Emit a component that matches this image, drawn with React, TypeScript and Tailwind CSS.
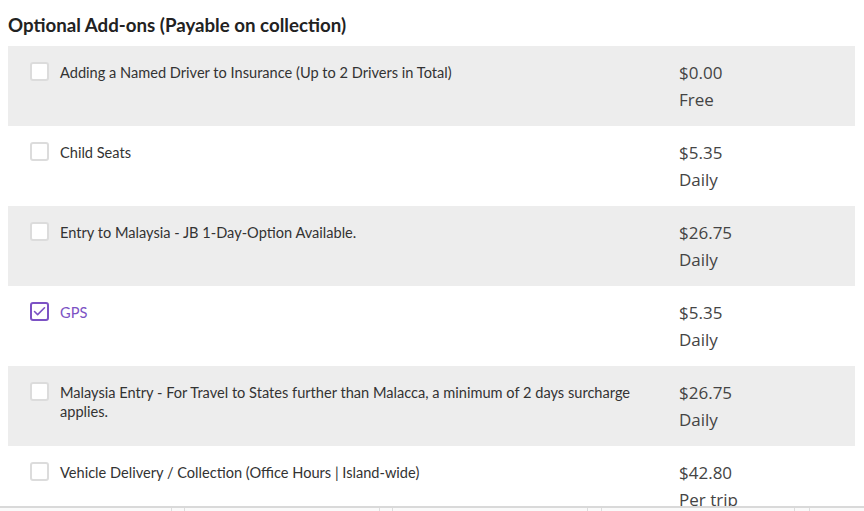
import { Check } from 'lucide-react';

type AddOn = {
  label: string;
  price: string;
  unit: string;
  checked?: boolean;
};

const addOns: AddOn[] = [
  { label: 'Adding a Named Driver to Insurance (Up to 2 Drivers in Total)', price: '$0.00', unit: 'Free' },
  { label: 'Child Seats', price: '$5.35', unit: 'Daily' },
  { label: 'Entry to Malaysia - JB 1-Day-Option Available.', price: '$26.75', unit: 'Daily' },
  { label: 'GPS', price: '$5.35', unit: 'Daily', checked: true },
  {
    label: 'Malaysia Entry - For Travel to States further than Malacca, a minimum of 2 days surcharge applies.',
    price: '$26.75',
    unit: 'Daily',
  },
  { label: 'Vehicle Delivery / Collection (Office Hours | Island-wide)', price: '$42.80', unit: 'Per trip' },
];

export default function App() {
  return (
    <div className="relative h-[511px] overflow-hidden bg-white font-['Lato',sans-serif]">
      <div className="pl-2 pr-[9px] pt-[13px]">
        <h2 className="text-[18.7px] font-bold leading-[24px] text-[#222] mb-[9px]">
          Optional Add-ons (Payable on collection)
        </h2>
        <div>
          {addOns.map((a, i) => (
            <div
              key={a.label}
              className={`flex h-20 pt-4 pl-[22px] ${i % 2 === 0 ? 'bg-[#ededed]' : 'bg-white'}`}
            >
              {/* Checkbox */}
              <div
                className={`w-[19px] h-[19px] shrink-0 rounded-[3px] border-2 flex items-center justify-center ${
                  a.checked ? 'border-[#7c52c4] bg-white' : 'border-[#dcdcdc] bg-white'
                }`}
              >
                {a.checked && <Check size={15} strokeWidth={2.5} className="text-[#7c52c4]" />}
              </div>
              <div
                className={`ml-[11px] w-[596px] text-[14.6px] leading-[19px] pt-[1px] ${
                  a.checked ? 'text-[#7c52c4]' : 'text-[#333]'
                }`}
              >
                {a.label}
              </div>
              <div className="ml-[23px] font-['Open_Sans',sans-serif] text-[17px] leading-[27px] text-[#444] -mt-[3px]">
                <div>{a.price}</div>
                <div>{a.unit}</div>
              </div>
            </div>
          ))}
        </div>
      </div>

      {/* bottom fixed bar */}
      <div className="absolute left-0 right-0 bottom-0 h-[5px] border-t-2 border-[#d9d9d9] bg-[#fafafa] flex">
        <div className="w-[172px] border-r border-[#ddd]" />
        <div className="w-[13px] border-r border-[#ddd]" />
        <div className="w-[195px] border-r border-[#ddd]" />
        <div className="w-[13px] border-r border-[#ddd]" />
        <div className="w-[195px] border-r border-[#ddd]" />
        <div className="w-[14px] border-r border-[#ddd]" />
        <div className="w-[193px] border-r border-[#ddd]" />
        <div className="w-[15px] border-r border-[#ddd]" />
      </div>
    </div>
  );
}
